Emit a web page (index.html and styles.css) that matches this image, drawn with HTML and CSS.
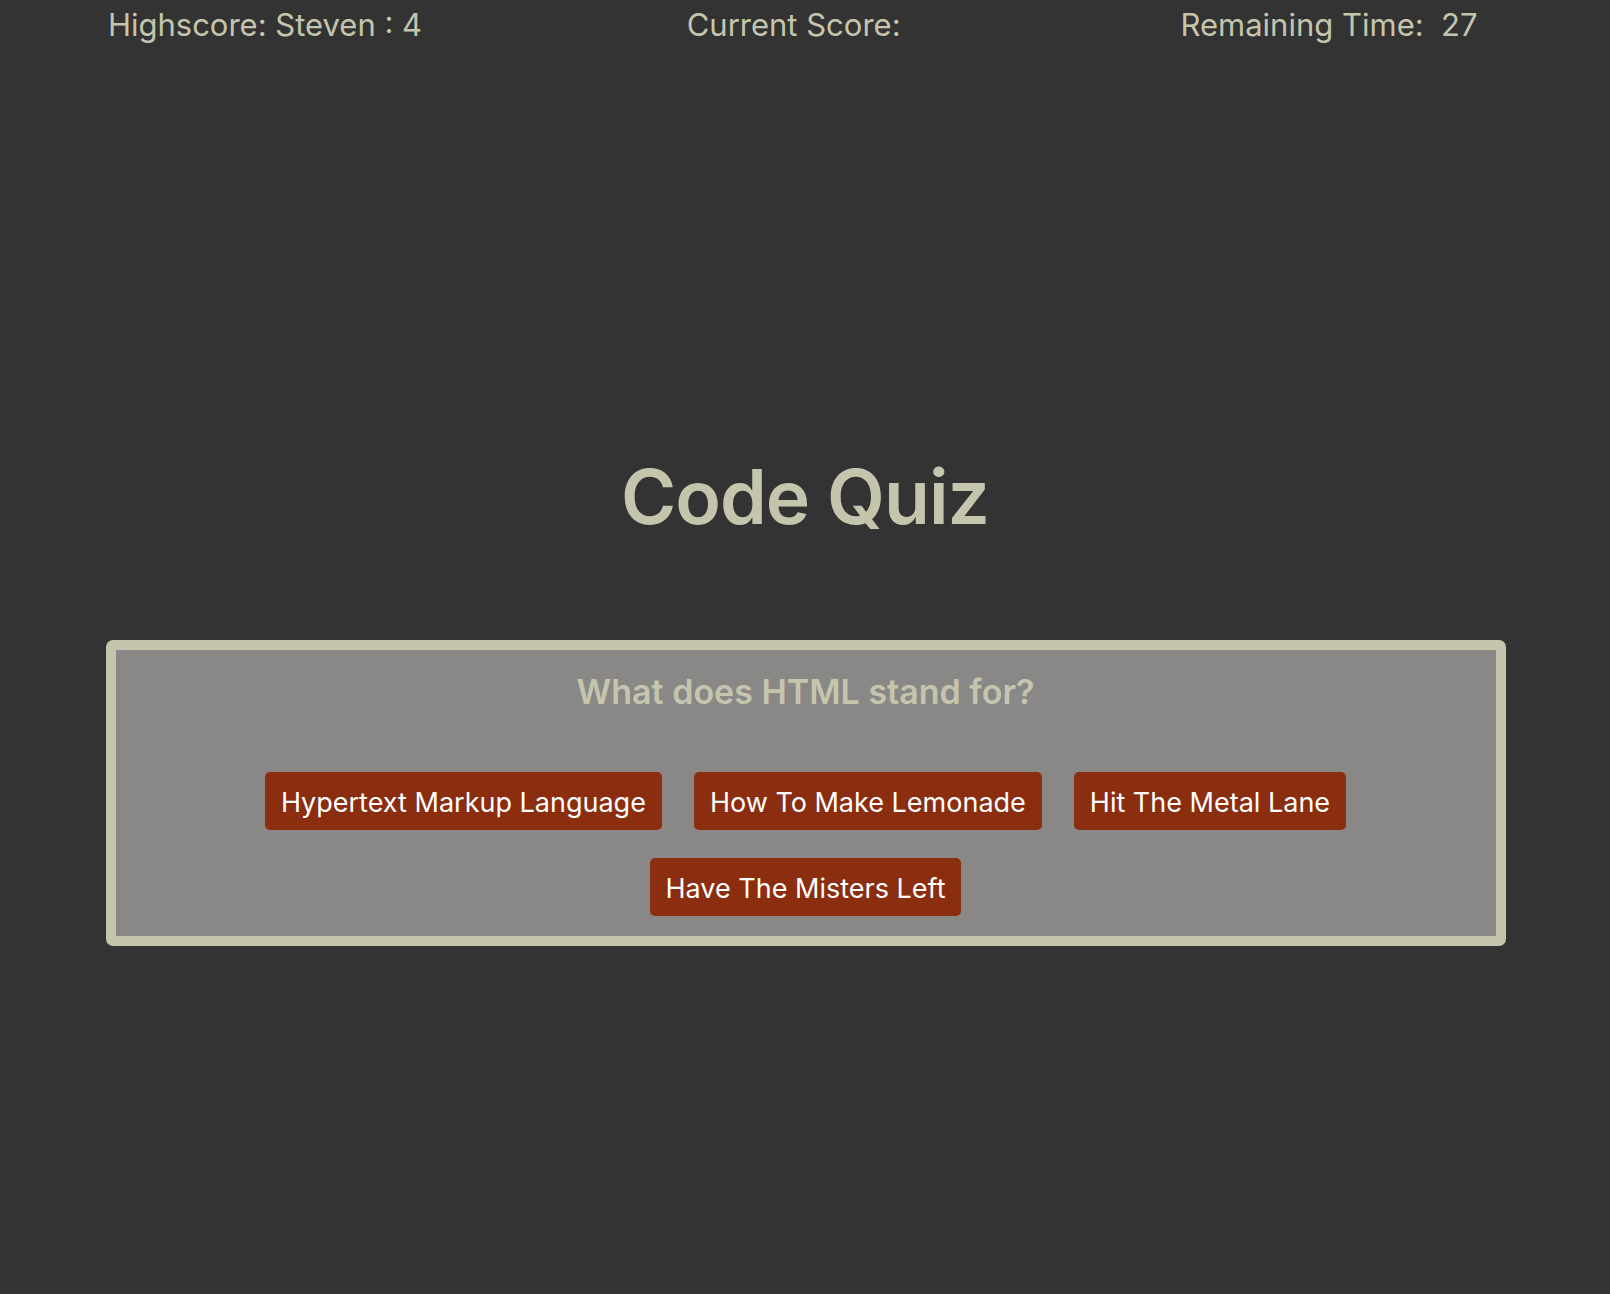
FILE: index.html
```html
<!DOCTYPE html>
<html lang="en">
<head>
<meta charset="utf-8">
<title>Code Quiz</title>
<link rel="stylesheet" href="styles.css">
</head>
<body>
<header class="scorebar">
  <div class="stat">Highscore: <span>Steven : 4</span></div>
  <div class="stat">Current Score: <span></span></div>
  <div class="stat">Remaining Time:&nbsp; <span>27</span></div>
</header>
<main class="main">
  <h1 class="title">Code Quiz</h1>
  <section class="quiz">
    <h2 class="question">What does HTML stand for?</h2>
    <div class="answers">
      <button class="answer">Hypertext Markup Language</button>
      <button class="answer">How To Make Lemonade</button>
      <button class="answer">Hit The Metal Lane</button>
      <button class="answer">Have The Misters Left</button>
    </div>
  </section>
</main>
</body>
</html>
```

FILE: styles.css
```css
html, body {
  margin: 0;
  padding: 0;
}
body {
  background: #333333;
  color: #c5c5ae;
  font-family: Inter, "Noto Sans", sans-serif;
  min-height: 1294px;
}
.scorebar {
  display: grid;
  grid-template-columns: 530px 536px 526px;
  padding: 5px 18px 0 0;
  font-size: 31px;
  line-height: 40px;
}
.stat {
  text-align: center;
  white-space: pre;
}
.main {
  display: flex;
  flex-direction: column;
  align-items: center;
}
.title {
  margin: 405px 0 0;
  font-size: 75px;
  line-height: 94px;
  font-weight: 600;
  letter-spacing: -1px;
}
.quiz {
  box-sizing: border-box;
  width: 1400px;
  margin-top: 96px;
  margin-left: 1px;
  border: 10px solid #c5c5ae;
  border-radius: 7px;
  background: #898886;
  padding: 20px 0 20px;
  display: flex;
  flex-direction: column;
  align-items: center;
}
.question {
  margin: 0;
  font-size: 34px;
  line-height: 44px;
  font-weight: 600;
  color: #c5c5ae;
}
.answers {
  margin-top: 58px;
  display: flex;
  flex-wrap: wrap;
  justify-content: center;
  column-gap: 32px;
  row-gap: 28px;
  width: 1100px;
}
.answer {
  font-family: Inter, "Noto Sans", sans-serif;
  font-size: 27px;
  line-height: 34px;
  padding: 14px 16px 10px;
  height: 58px;
  border: none;
  border-radius: 5px;
  background: #8b2d0f;
  color: #ffffff;
  cursor: pointer;
}
```
